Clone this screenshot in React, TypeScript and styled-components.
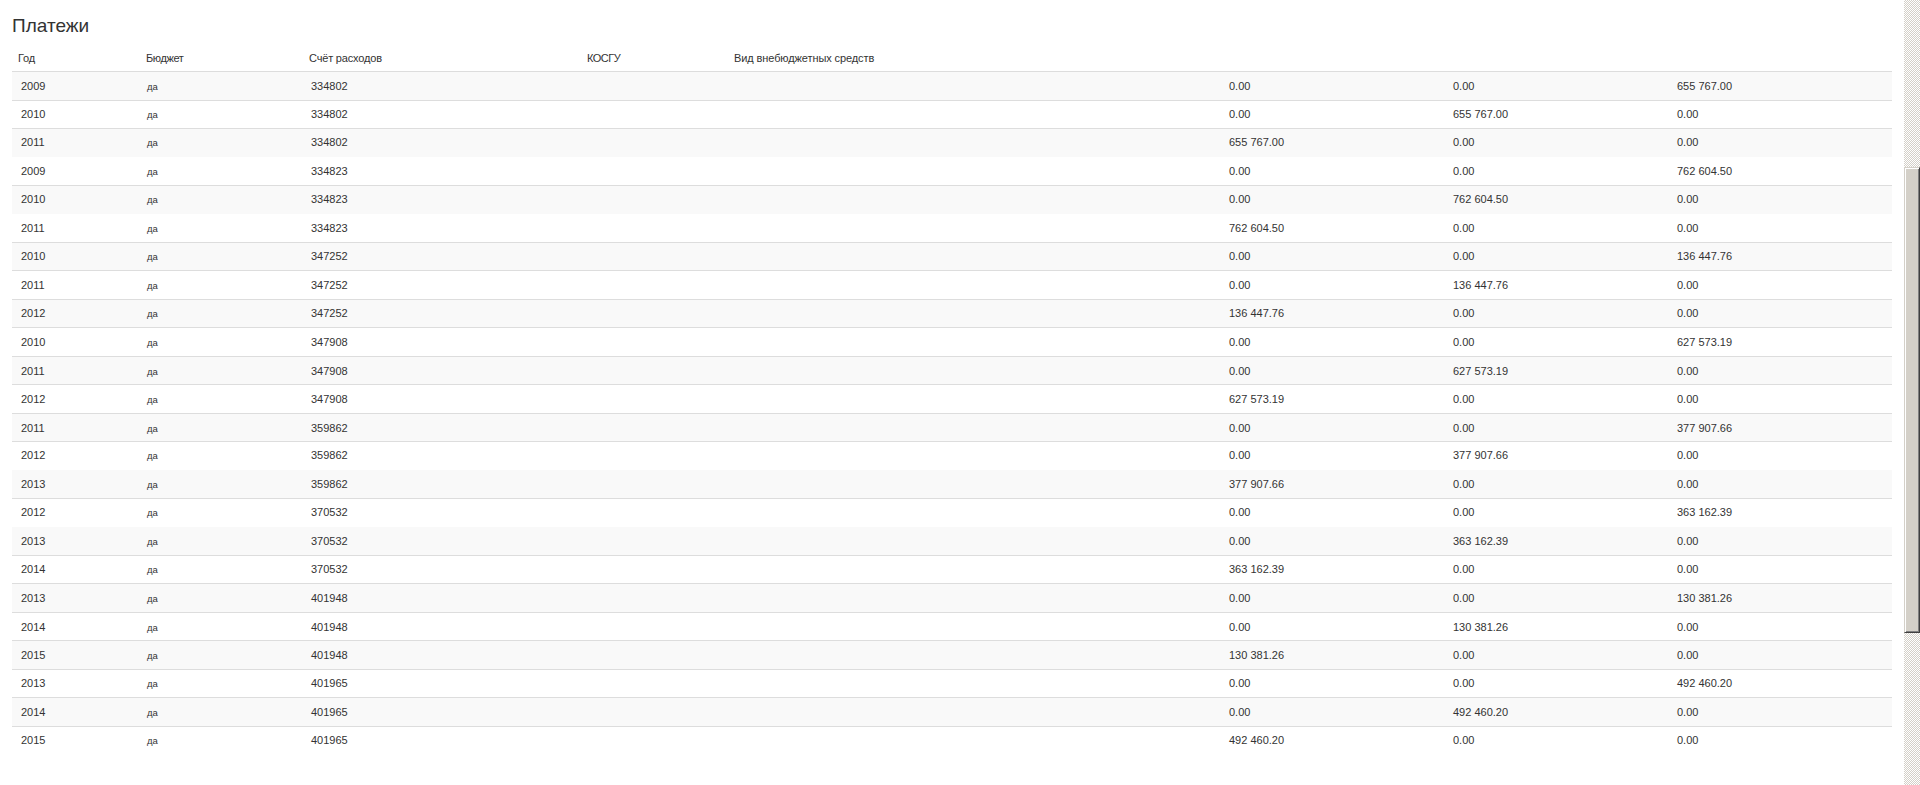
import React from "react";
import styled, { createGlobalStyle } from "styled-components";

const GlobalStyle = createGlobalStyle`
  html, body {
    margin: 0;
    height: 100%;
    overflow: hidden;
    background: #fff;
  }
`;

const Page = styled.div`
  display: flex;
  height: 785px;
  font-family: "Liberation Sans", Arial, sans-serif;
  color: #333;
`;

const Content = styled.main`
  flex: 1;
  min-width: 0;
  padding: 0 12px;
`;

const Title = styled.h2`
  margin: 0;
  height: 38px;
  padding-top: 15px;
  box-sizing: border-box;
  font-size: 19px;
  line-height: 22px;
  font-weight: 400;
  color: #333;
`;

const Table = styled.table`
  width: 1880px;
  table-layout: fixed;
  border-collapse: separate;
  border-spacing: 0;
  font-size: 11px;
  line-height: 13px;
`;

const HeadCell = styled.th<{ $pad: number; $tracking: number }>`
  height: 33px;
  box-sizing: border-box;
  padding: 0 0 6px ${(p) => p.$pad}px;
  vertical-align: bottom;
  text-align: left;
  font-weight: 400;
  letter-spacing: ${(p) => p.$tracking}px;
  white-space: nowrap;
`;

const Row = styled.tr<{ $striped: boolean; $height: number; $rule: boolean; $low: boolean }>`
  height: ${(p) => p.$height}px;
  background: ${(p) => (p.$striped ? "#f9f9f9" : "#fff")};

  td {
    border-top: 1px solid ${(p) => (p.$rule ? "#ddd" : "transparent")};
    padding-top: ${(p) => (p.$low ? 8 : 7)}px;
  }
`;

const Cell = styled.td`
  box-sizing: border-box;
  padding: 0 0 0 8px;
  vertical-align: top;
  white-space: nowrap;
`;

const YearCell = styled(Cell)`
  padding-left: 9px;
`;

const YesCell = styled(Cell)`
  padding-left: 9px;
  font-size: 9.5px;
`;

const ScrollTrack = styled.div`
  flex: none;
  width: 16px;
  height: 785px;
  padding-top: 167px;
  box-sizing: border-box;
  background: conic-gradient(#d4d0c8 25%, #fff 0 50%, #d4d0c8 0 75%, #fff 0) 0 0 / 2px 2px;
`;

const ScrollThumb = styled.div`
  height: 466px;
  box-sizing: border-box;
  background: #d4d0c8;
  border-top: 1px solid #d4d0c8;
  border-left: 1px solid #d4d0c8;
  border-right: 1px solid #404040;
  border-bottom: 1px solid #404040;
  box-shadow: inset 1px 1px 0 #fff, inset -1px -1px 0 #808080;
`;

const columns = [126, 165, 276, 147, 495, 224, 224, 223];
const headers = [
  { label: "Год", pad: 6, tracking: -0.2 },
  { label: "Бюджет", pad: 8, tracking: -0.4 },
  { label: "Счёт расходов", pad: 6, tracking: -0.18 },
  { label: "КОСГУ", pad: 8, tracking: -0.5 },
  { label: "Вид внебюджетных средств", pad: 8, tracking: -0.1 },
  { label: "", pad: 8, tracking: 0 },
  { label: "", pad: 8, tracking: 0 },
  { label: "", pad: 8, tracking: 0 },
];

const groups = [
  { account: "334802", startYear: 2009, sum: "655 767.00" },
  { account: "334823", startYear: 2009, sum: "762 604.50" },
  { account: "347252", startYear: 2010, sum: "136 447.76" },
  { account: "347908", startYear: 2010, sum: "627 573.19" },
  { account: "359862", startYear: 2011, sum: "377 907.66" },
  { account: "370532", startYear: 2012, sum: "363 162.39" },
  { account: "401948", startYear: 2013, sum: "130 381.26" },
  { account: "401965", startYear: 2013, sum: "492 460.20" },
];

// the payment moves one column left every year
const payments = groups.flatMap((g) =>
  [0, 1, 2].map((i) => ({
    year: g.startYear + i,
    account: g.account,
    amounts: [0, 1, 2].map((col) => (col === 2 - i ? g.sum : "0.00")),
  }))
);

const rowTops = [
  71, 100, 128, 157, 185, 214, 242, 270, 299, 327, 356, 384, 413, 441, 470, 498,
  527, 555, 583, 612, 640, 669, 697, 726, 755,
];
const noRule = [3, 5, 14, 16];
const lowRows = [0, 7, 9, 10, 11, 12, 18, 19, 20, 22];

const App: React.FC = () => {
  return (
    <Page>
      <GlobalStyle />
      <Content>
        <Title>Платежи</Title>
        <Table>
          <colgroup>
            {columns.map((w, i) => (
              <col key={i} width={w} />
            ))}
          </colgroup>
          <thead>
            <tr>
              {headers.map((h, i) => (
                <HeadCell key={i} $pad={h.pad} $tracking={h.tracking}>
                  {h.label}
                </HeadCell>
              ))}
            </tr>
          </thead>
          <tbody>
            {payments.map((p, i) => (
              <Row
                key={i}
                $striped={i % 2 === 0}
                $height={rowTops[i + 1] - rowTops[i]}
                $rule={!noRule.includes(i)}
                $low={lowRows.includes(i)}
              >
                <YearCell>{p.year}</YearCell>
                <YesCell>да</YesCell>
                <Cell>{p.account}</Cell>
                <Cell />
                <Cell />
                {p.amounts.map((a, col) => (
                  <Cell key={col}>{a}</Cell>
                ))}
              </Row>
            ))}
          </tbody>
        </Table>
      </Content>
      <ScrollTrack>
        <ScrollThumb />
      </ScrollTrack>
    </Page>
  );
};

export default App;
